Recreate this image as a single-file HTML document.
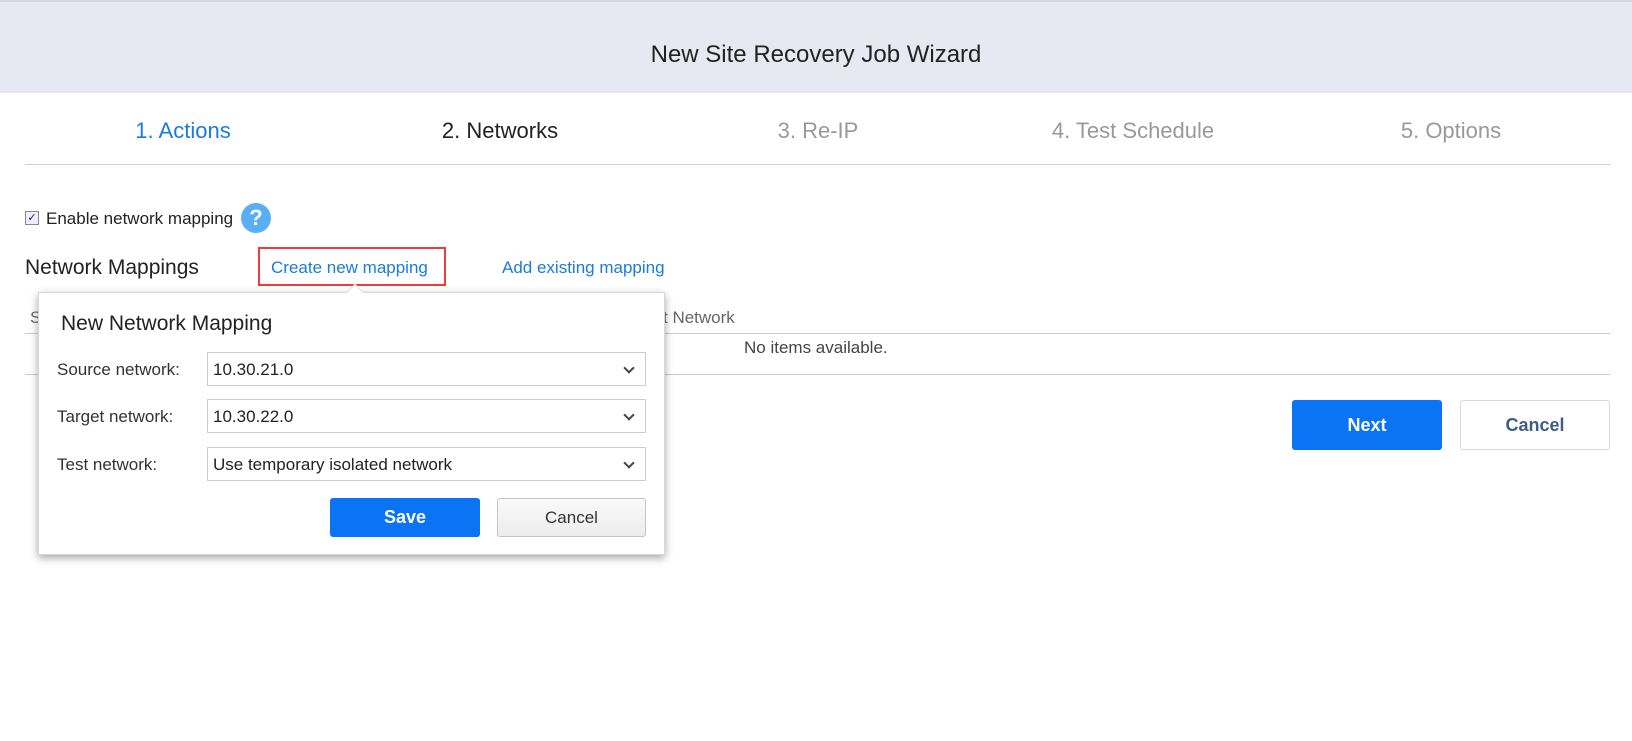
<!DOCTYPE html>
<html><head><meta charset="utf-8"><style>
*{box-sizing:border-box;margin:0;padding:0}
body{width:1632px;height:741px;background:#fff;font-family:"Liberation Sans",sans-serif;position:relative;overflow:hidden;color:#333}
.a{position:absolute;white-space:nowrap}
.hdr{left:0;top:0;width:1632px;height:93px;background:#e6e9f1;border-top:2px solid #d5d8de}
.sel{position:absolute;left:207px;width:439px;height:34px;border:1px solid #ccc;background:#fff;font-size:17px;padding:7px 5px;color:#222}
.sel:after{content:"";position:absolute;right:12px;top:11px;width:6px;height:6px;border-right:2px solid #444;border-bottom:2px solid #444;transform:rotate(45deg)}
.lbl{position:absolute;left:57px;font-size:17px;color:#333}
</style></head><body>
<div class="a hdr"></div>
<div class="a" style="left:0;width:1632px;top:41px;text-align:center;font-size:24px;color:#222">New Site Recovery Job Wizard</div>
<div class="a" style="left:183px;top:118px;font-size:22px;color:#1a7be0;transform:translateX(-50%)">1. Actions</div>
<div class="a" style="left:500px;top:118px;font-size:22px;color:#222;transform:translateX(-50%)">2. Networks</div>
<div class="a" style="left:818px;top:118px;font-size:22px;color:#999;transform:translateX(-50%)">3. Re-IP</div>
<div class="a" style="left:1133px;top:118px;font-size:22px;color:#999;transform:translateX(-50%)">4. Test Schedule</div>
<div class="a" style="left:1451px;top:118px;font-size:22px;color:#999;transform:translateX(-50%)">5. Options</div>
<div class="a" style="left:25px;top:164px;width:1585px;height:1px;background:#d0d0d0"></div>

<div class="a" style="left:25px;top:211px;width:14px;height:14px;border:1px solid #888;background:#eef;font-size:11px;line-height:12px;text-align:center;color:#224">✓</div>
<div class="a" style="left:46px;top:209px;font-size:17px;color:#222">Enable network mapping</div>
<div class="a" style="left:241px;top:203px;width:30px;height:30px;border-radius:50%;background:#5aaef5;color:#fff;font-weight:bold;font-size:22px;text-align:center;line-height:30px">?</div>

<div class="a" style="left:25px;top:256px;font-size:21px;color:#222">Network Mappings</div>
<div class="a" style="left:258px;top:247px;width:188px;height:39px;border:2px solid #ef3b3b"></div>
<div class="a" style="left:271px;top:258px;font-size:17px;color:#1a7be0">Create new mapping</div>
<div class="a" style="left:502px;top:258px;font-size:17px;color:#1a7be0">Add existing mapping</div>

<div class="a" style="left:30px;top:308px;font-size:17px;color:#666">S</div>
<div class="a" style="left:663px;top:308px;font-size:17px;color:#666">t Network</div>
<div class="a" style="left:25px;top:333px;width:1585px;height:1px;background:#ccc"></div>
<div class="a" style="left:744px;top:338px;font-size:17px;color:#444">No items available.</div>
<div class="a" style="left:25px;top:374px;width:1585px;height:1px;background:#ccc"></div>

<div class="a" style="left:1292px;top:400px;width:150px;height:50px;background:#0a74f5;border-radius:3px;color:#fff;font-weight:bold;font-size:18px;text-align:center;line-height:50px">Next</div>
<div class="a" style="left:1460px;top:400px;width:150px;height:50px;background:#fff;border:1px solid #d5dbe3;border-radius:3px;color:#3d5d85;font-weight:bold;font-size:18px;text-align:center;line-height:48px">Cancel</div>

<div class="a" style="left:38px;top:292px;width:627px;height:263px;background:#fff;border:1px solid #d8d8d8;box-shadow:0 3px 8px rgba(0,0,0,.35)"></div>
<div class="a" style="left:349px;top:286px;width:12px;height:12px;background:#fff;border-left:1px solid #ddd;border-top:1px solid #ddd;transform:rotate(45deg)"></div>
<div class="a" style="left:61px;top:312px;font-size:21px;color:#222">New Network Mapping</div>
<div class="lbl" style="top:360px">Source network:</div>
<div class="sel" style="top:352px">10.30.21.0</div>
<div class="lbl" style="top:407px">Target network:</div>
<div class="sel" style="top:399px">10.30.22.0</div>
<div class="lbl" style="top:455px">Test network:</div>
<div class="sel" style="top:447px">Use temporary isolated network</div>
<div class="a" style="left:330px;top:498px;width:150px;height:39px;background:#0a74f5;border-radius:3px;color:#fff;font-weight:bold;font-size:18px;text-align:center;line-height:39px">Save</div>
<div class="a" style="left:497px;top:498px;width:149px;height:39px;background:linear-gradient(#fafafa,#ececec);border:1px solid #c4c4c4;border-radius:3px;color:#333;font-size:17px;text-align:center;line-height:37px">Cancel</div>
</body></html>
